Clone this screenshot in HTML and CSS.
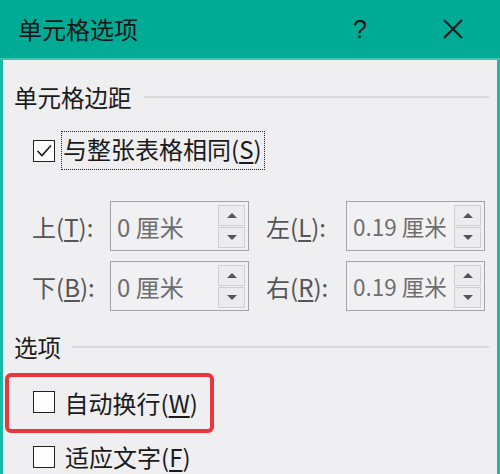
FILE: index.html
```html
<!DOCTYPE html>
<html lang="zh-CN">
<head>
    <meta charset="UTF-8">
    <title>单元格选项</title>
    <link rel="stylesheet" href="styles.css">
</head>
<body>
    <div class="dialog">
        <!-- Title bar -->
        <div class="titlebar">
            <div class="title">单元格选项</div>
            <div class="help">?</div>
            <div class="close">
                <svg width="20" height="20" viewBox="0 0 20 20">
                    <path d="M1 1 L19 19 M19 1 L1 19" stroke="#1d1d1d" stroke-width="2.2" fill="none"/>
                </svg>
            </div>
        </div>

        <div class="content">
            <!-- Cell margins -->
            <div class="section-head">
                <span>单元格边距</span>
                <div class="line"></div>
            </div>

            <div class="check-row same-row">
                <span class="checkbox checked">
                    <svg width="18" height="18" viewBox="0 0 18 18">
                        <path d="M2.5 9 L7 13.5 L16 3.5" stroke="#1a1a1a" stroke-width="1.6" fill="none"/>
                    </svg>
                </span>
                <span class="focus-label">与整张表格相同(<u>S</u>)</span>
            </div>

            <div class="margin-grid">
                <div class="field-label">上(<u>T</u>):</div>
                <div class="spin-col">
                    <div class="spinbox">
                        <span class="value">0 厘米</span>
                        <div class="spin-buttons">
                            <div class="spin-btn"><span class="arrow up"></span></div>
                            <div class="spin-btn"><span class="arrow down"></span></div>
                        </div>
                    </div>
                </div>
                <div class="field-label">左(<u>L</u>):</div>
                <div class="spinbox">
                    <span class="value narrow">0.19 厘米</span>
                    <div class="spin-buttons">
                        <div class="spin-btn"><span class="arrow up"></span></div>
                        <div class="spin-btn"><span class="arrow down"></span></div>
                    </div>
                </div>

                <div class="field-label">下(<u>B</u>):</div>
                <div class="spin-col">
                    <div class="spinbox">
                        <span class="value">0 厘米</span>
                        <div class="spin-buttons">
                            <div class="spin-btn"><span class="arrow up"></span></div>
                            <div class="spin-btn"><span class="arrow down"></span></div>
                        </div>
                    </div>
                </div>
                <div class="field-label">右(<u>R</u>):</div>
                <div class="spinbox">
                    <span class="value narrow">0.19 厘米</span>
                    <div class="spin-buttons">
                        <div class="spin-btn"><span class="arrow up"></span></div>
                        <div class="spin-btn"><span class="arrow down"></span></div>
                    </div>
                </div>
            </div>

            <!-- Options -->
            <div class="section-head options-head">
                <span>选项</span>
                <div class="line"></div>
            </div>

            <div class="highlight">
                <div class="check-row">
                    <span class="checkbox"></span>
                    <span class="check-text">自动换行(<u>W</u>)</span>
                </div>
            </div>

            <div class="check-row last-row">
                <span class="checkbox"></span>
                <span class="check-text">适应文字(<u>F</u>)</span>
            </div>
        </div>
    </div>
</body>
</html>
```

FILE: styles.css
```css
/* Base */
* {
    margin: 0;
    padding: 0;
    box-sizing: border-box;
    font-family: "Noto Sans CJK SC", "Noto Sans", sans-serif;
}

body {
    width: 500px;
    height: 474px;
    overflow: hidden;
    background: #efeef0;
}

u {
    text-decoration-thickness: 1.5px;
    text-underline-offset: 3px;
}

.dialog {
    display: flex;
    flex-direction: column;
    height: 474px;
}

/* Title bar */
.titlebar {
    height: 60px;
    flex-shrink: 0;
    display: flex;
    align-items: center;
    padding-left: 18px;
    background: #00ab96;
    border-bottom: 2px solid #3cc7b4;
    color: #151515;
}

.titlebar .title {
    font-size: 24px;
    flex: 1;
    line-height: 30px;
}

.titlebar .help {
    font-size: 25px;
    width: 20px;
    margin-right: 70px;
    font-family: "Liberation Sans", sans-serif;
}

.titlebar .close {
    width: 20px;
    height: 20px;
    margin-right: 37px;
}

/* Content */
.content {
    flex: 1;
    padding: 22px 11px 0 11px;
    border-left: 3px solid #1bb8a6;
    border-right: 3px solid #1bb8a6;
    color: #1a1a1a;
}

.section-head {
    display: flex;
    align-items: center;
    height: 30px;
    font-size: 23.5px;
}

.section-head .line {
    flex: 1;
    height: 2px;
    background: #d9d8da;
    margin-left: 12px;
    margin-right: -3px;
}

.options-head {
    margin-top: 21px;
}

.options-head .line {
    margin-left: 11px;
}

.check-row {
    display: flex;
    align-items: center;
    margin-left: 19px;
    font-size: 24px;
}

.same-row {
    margin-top: 19px;
    height: 39px;
}

.checkbox {
    width: 22px;
    height: 22px;
    border: 1.6px solid #202020;
    background: #fdfdfd;
    display: flex;
    align-items: center;
    justify-content: center;
    flex-shrink: 0;
}

.focus-label {
    margin-left: 6px;
    padding: 0 2px 4px 1px;
    border: 1.5px dotted #222;
    height: 39px;
    line-height: 33px;
}

.check-text {
    margin-left: 10px;
    line-height: 30px;
}

/* Margin fields */
.margin-grid {
    margin-top: 31px;
    margin-left: 18px;
    display: grid;
    grid-template-columns: 78px 156px 80px 139px;
    grid-auto-rows: 50px;
    row-gap: 10px;
    align-items: center;
}

.field-label {
    font-size: 24px;
    color: #555;
}

.spin-col {
    width: 139px;
}

.spinbox {
    height: 50px;
    border: 1.5px solid #a4a3a5;
    background: #f1f0f2;
    display: flex;
    align-items: center;
    padding-left: 6px;
    padding-right: 3px;
}

.spinbox .value {
    flex: 1;
    font-size: 24px;
    color: #6e6e6e;
    white-space: nowrap;
    overflow: hidden;
}

.spinbox .value.narrow {
    font-size: 22.5px;
}

.spin-buttons {
    display: flex;
    flex-direction: column;
    gap: 1px;
    width: 27px;
    flex-shrink: 0;
}

.spin-btn {
    height: 21px;
    border: 1px solid #cfcfd1;
    background: #ecebed;
    display: flex;
    align-items: center;
    justify-content: center;
}

.arrow {
    width: 0;
    height: 0;
    border-left: 5px solid transparent;
    border-right: 5px solid transparent;
}

.arrow.up {
    border-bottom: 5px solid #555;
}

.arrow.down {
    border-top: 5px solid #555;
}

/* Red annotation box */
.highlight {
    margin-top: 11px;
    margin-left: -9px;
    width: 209px;
    height: 60px;
    border: 4.5px solid #e8383d;
    border-radius: 6px;
    display: flex;
    align-items: center;
}

.highlight .check-row {
    margin-left: 23.5px;
}

.highlight .check-row .checkbox {
    margin-top: -2px;
}

.last-row {
    margin-top: 9px;
    height: 30px;
}
```
